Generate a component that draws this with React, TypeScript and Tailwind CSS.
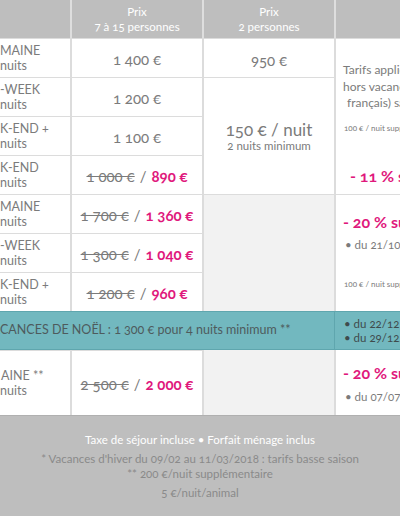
const pink = "text-[#e0187c]";

function Cut({ hide, show, className = "", showClass = "" }: { hide: string; show: string; className?: string; showClass?: string }) {
  // the part in `hide` sits left of the cell edge and is clipped
  return (
    <div className={`flex whitespace-nowrap ${className}`}>
      <span className="flex w-0 justify-end">{hide}</span>
      <span className={showClass}>{show}</span>
    </div>
  );
}

function Label({ a, b, c, d, pad = "" }: { a: string; b: string; c: string; d: string; pad?: string }) {
  return (
    <div className="flex flex-col justify-center overflow-hidden border-t border-[#dcdcdc] text-[12.5px] leading-[15px] text-[#7b7b7b]">
      <Cut hide={a} show={b} showClass={pad} />
      <Cut hide={c} show={d} />
    </div>
  );
}

function Price({ children }: { children: React.ReactNode }) {
  return (
    <div className="flex items-center justify-center border-t border-l-2 border-[#dcdcdc] pt-[3px] text-[15px] text-[#7b7b7b]">
      {children}
    </div>
  );
}

function Promo({ old, now }: { old: string; now: string }) {
  return (
    <Price>
      <span className="line-through decoration-[#7b7b7b]">{old}</span>
      <span className="mx-[5px]">/</span>
      <span className={`font-bold ${pink}`}>{now}</span>
    </Price>
  );
}

export default function App() {
  return (
    <div className="h-[516px] w-[400px] overflow-hidden bg-white font-['Lato','Open_Sans',sans-serif] [font-variant-numeric:oldstyle-nums]">
      <div className="grid grid-cols-[70px_132px_132px_66px] grid-rows-[38px_39px_39px_39px_39px_39px_39px_39px_39px_65px]">
        {/* header */}
        <div className="bg-[#bebebe]" />
        <div className="flex flex-col items-center justify-center border-l-2 border-[#dedede] bg-[#bebebe] text-[11.5px] leading-[15px] text-white">
          <span>Prix</span>
          <span>7 à 15 personnes</span>
        </div>
        <div className="flex flex-col items-center justify-center border-l-2 border-[#dedede] bg-[#bebebe] text-[11.5px] leading-[15px] text-white">
          <span>Prix</span>
          <span>2 personnes</span>
        </div>
        <div className="border-l-2 border-[#dedede] bg-[#bebebe]" />

        {/* row 1 */}
        <Label a="SE" b="MAINE" c="7 " d="nuits" />
        <Price>1 400 €</Price>
        <div className="flex items-center justify-center border-t border-l-2 border-[#dcdcdc] pt-[5px] text-[15px] text-[#7b7b7b]">
          950 €
        </div>
        <div className="row-span-4 overflow-hidden whitespace-nowrap border-t border-l-2 border-[#dcdcdc] pt-[23px] text-[#7b7b7b]">
          <div className="pl-[7px] text-[12px] leading-[16.5px]">
            <div>Tarifs applicables</div>
            <div>hors vacances scolaires</div>
            <div className="pl-[4px]">français) sauf jours fériés</div>
          </div>
          <div className="mt-[10px] pl-[8px] text-[8px] leading-[12px]">100 € / nuit supplémentaire</div>
          <div className={`mt-[32px] pl-[14px] text-[16px] font-bold leading-[20px] ${pink}`}>- 11 % sur le tarif</div>
        </div>

        {/* row 2 */}
        <Label a="MID" b="-WEEK" c="4 " d="nuits" />
        <Price>1 200 €</Price>
        <div className="row-span-3 flex flex-col items-center border-t border-l-2 border-[#dcdcdc] pt-[42px] text-[#7b7b7b]">
          <span className="text-[17px] leading-[20px]">150 € / nuit</span>
          <span className="-mt-[1px] text-[11.5px] leading-[14px]">2 nuits minimum</span>
        </div>

        {/* row 3 */}
        <Label a="WEE" b="K-END +" c="3 " d="nuits" />
        <Price>1 100 €</Price>

        {/* row 4 */}
        <Label a="WEE" b="K-END" c="2 " d="nuits" />
        <Promo old="1 000 €" now="890 €" />

        {/* row 5 */}
        <Label a="SE" b="MAINE" c="7 " d="nuits" />
        <Promo old="1 700 €" now="1 360 €" />
        <div className="row-span-3 border-t border-l-2 border-[#dcdcdc] bg-[#f2f2f2]" />
        <div className="row-span-3 overflow-hidden whitespace-nowrap border-t border-l-2 border-[#dcdcdc] pt-[17px] text-[#7b7b7b]">
          <div className={`pl-[7px] text-[16px] font-bold leading-[20px] ${pink}`}>- 20 % sur le tarif</div>
          <div className="mt-[5px] pl-[9px] text-[11.5px] leading-[16px]">• du 21/10 au 05/11</div>
          <div className="mt-[25px] pl-[8px] text-[8px] leading-[12px]">100 € / nuit supplémentaire</div>
        </div>

        {/* row 6 */}
        <Label a="MID" b="-WEEK" c="4 " d="nuits" />
        <Promo old="1 300 €" now="1 040 €" />

        {/* row 7 */}
        <Label a="WEE" b="K-END +" c="3 " d="nuits" />
        <Promo old="1 200 €" now="960 €" />

        {/* christmas band */}
        <div className="col-span-3 flex items-center overflow-hidden border-y border-[#5fa6ae] bg-[#72b8bf] text-[12.5px] text-[#4e5b5d]">
          <Cut hide="VA" show="CANCES DE NOËL : 1 300 € pour 4 nuits minimum **" />
        </div>
        <div className="flex flex-col justify-center overflow-hidden whitespace-nowrap border-y border-l border-[#5fa6ae] bg-[#72b8bf] pl-[9px] text-[11.5px] leading-[14px] text-[#3f4b4d]">
          <div>• du 22/12 au 28/12</div>
          <div>• du 29/12/2017 au 05/01/2018</div>
        </div>

        {/* last row */}
        <Label a="SEM" b="AINE **" c="7 " d="nuits" pad="pl-[1px]" />
        <Promo old="2 500 €" now="2 000 €" />
        <div className="border-l-2 border-[#dcdcdc] bg-[#f2f2f2]" />
        <div className="overflow-hidden whitespace-nowrap border-l-2 border-[#dcdcdc] pt-[13px] text-[#7b7b7b]">
          <div className={`pl-[7px] text-[16px] font-bold leading-[20px] ${pink}`}>- 20 % sur le tarif</div>
          <div className="mt-[6px] pl-[9px] text-[11.5px] leading-[16px]">• du 07/07 au 25/08</div>
        </div>
      </div>

      <footer className="flex h-[101px] flex-col items-center border-t border-[#b0b0b0] bg-[#bebebe] pt-[15px] text-[11.5px]">
        <p className="leading-[18px] text-white">Taxe de séjour incluse • Forfait ménage inclus</p>
        <div className="mt-[2px] flex flex-col items-center leading-[15px] text-[#8a8a8a]">
          <p>* Vacances d'hiver du 09/02 au 11/03/2018 : tarifs basse saison</p>
          <p>** 200 €/nuit supplémentaire</p>
        </div>
        <p className="mt-[4px] leading-[15px] text-[#8a8a8a]">5 €/nuit/animal</p>
      </footer>
    </div>
  );
}
